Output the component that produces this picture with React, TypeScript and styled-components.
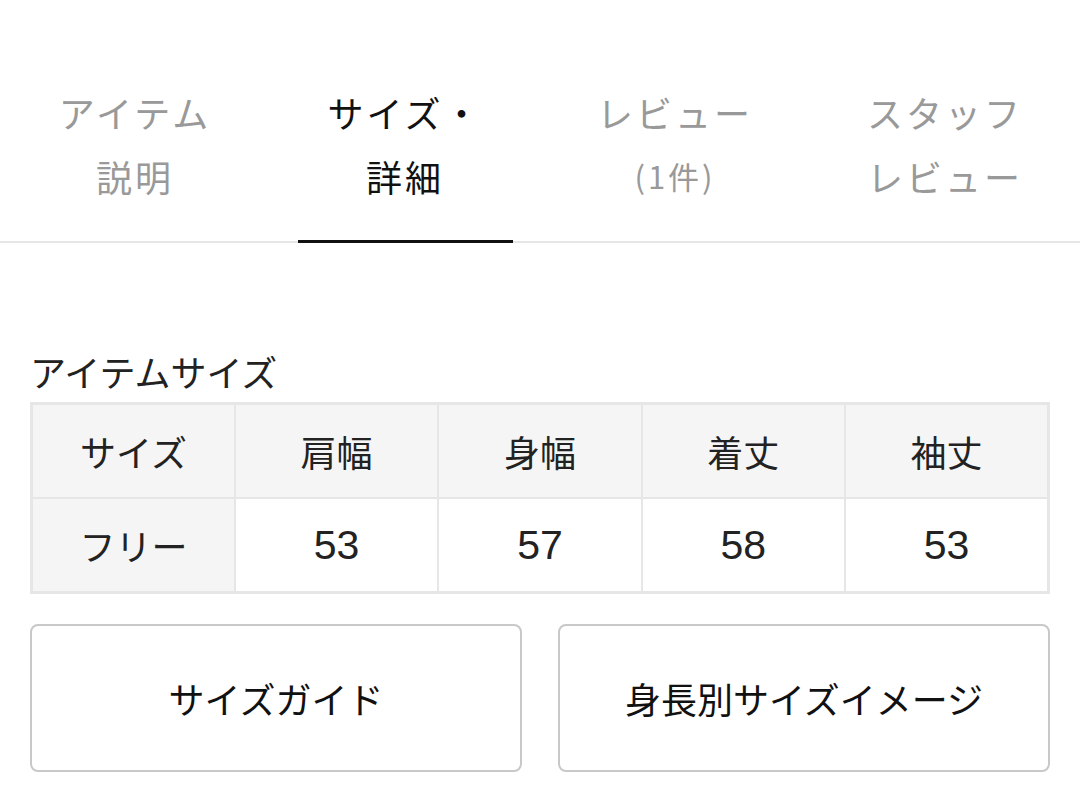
import React from 'react';
import styled, {createGlobalStyle} from "styled-components";

const GlobalStyle = createGlobalStyle`
  html, body {
    margin: 0;
    padding: 0;
    background: #fff;
  }
  body {
    font-family: "Noto Sans CJK JP", "Noto Sans", sans-serif;
    color: #222;
  }
`

const tabs = [
    {lines: ['アイテム', '説明'], active: false},
    {lines: ['サイズ・', '詳細'], active: true},
    {lines: ['レビュー', '(1件)'], active: false},
    {lines: ['スタッフ', 'レビュー'], active: false},
];

const headers = ['サイズ', '肩幅', '身幅', '着丈', '袖丈'];
const rows = [['フリー', '53', '57', '58', '53']];

export default function App() {
    return (
        <Page>
            <GlobalStyle/>
            <TabBar>
                {tabs.map((t, i) => (
                    <Tab key={i} active={t.active}>
                        {t.lines.map((l, j) => <TabLine key={j} small={l.startsWith('(')}>{l}</TabLine>)}
                    </Tab>
                ))}
            </TabBar>
            <Section>
                <SectionTitle>アイテムサイズ</SectionTitle>
                <SizeTable>
                    <thead>
                    <tr>
                        {headers.map(h => <HeadCell key={h}>{h}</HeadCell>)}
                    </tr>
                    </thead>
                    <tbody>
                    {rows.map((r, i) => (
                        <tr key={i}>
                            {r.map((c, j) => j === 0
                                ? <HeadCell key={j}>{c}</HeadCell>
                                : <Cell key={j}>{c}</Cell>)}
                        </tr>
                    ))}
                    </tbody>
                </SizeTable>
                <ButtonRow>
                    <GuideButton>サイズガイド</GuideButton>
                    <GuideButton>身長別サイズイメージ</GuideButton>
                </ButtonRow>
            </Section>
        </Page>
    );
}

const Page = styled.div`
  width: 1080px;
  height: 788px;
  overflow: hidden;
  padding-top: 80px;
  box-sizing: border-box;
`

const TabBar = styled.nav`
  display: grid;
  grid-template-columns: repeat(4, 1fr);
  border-bottom: 2px solid #e6e6e6;
`

const Tab = styled.div<{ active: boolean }>`
  display: flex;
  flex-direction: column;
  align-items: center;
  padding-bottom: 32px;
  margin: 0 auto -2px;
  width: 215px;
  color: ${p => p.active ? '#111' : '#999'};
  border-bottom: 3px solid ${p => p.active ? '#111' : 'transparent'};
`

const TabLine = styled.span<{ small: boolean }>`
  font-size: ${p => p.small ? '31px' : '36px'};
  line-height: 64px;
  letter-spacing: 3px;
  white-space: nowrap;
`

const Section = styled.section`
  padding: 109px 30px 0;
`

const SectionTitle = styled.h2`
  margin: 0 0 12px;
  font-size: 36px;
  font-weight: 400;
  line-height: 38px;
  color: #222;
`

const SizeTable = styled.table`
  width: 100%;
  border-collapse: collapse;
  table-layout: fixed;
  border: 3px solid #e6e6e6;
`

const HeadCell = styled.th`
  height: 92px;
  padding: 0;
  background: #f5f5f5;
  border: 2px solid #e6e6e6;
  font-size: 36px;
  font-weight: 400;
  color: #222;
  text-align: center;
`

const Cell = styled.td`
  height: 92px;
  padding: 0;
  border: 2px solid #e6e6e6;
  font-size: 41px;
  color: #222;
  text-align: center;
  font-family: "Liberation Sans", "Noto Sans CJK JP", sans-serif;
`

const ButtonRow = styled.div`
  display: grid;
  grid-template-columns: 1fr 1fr;
  gap: 36px;
  margin-top: 30px;
`

const GuideButton = styled.button`
  height: 148px;
  background: #fff;
  border: 2px solid #c8c8c8;
  border-radius: 8px;
  font-family: "Noto Sans CJK JP", sans-serif;
  font-size: 36px;
  color: #111;
  letter-spacing: 0;
  cursor: pointer;
`
